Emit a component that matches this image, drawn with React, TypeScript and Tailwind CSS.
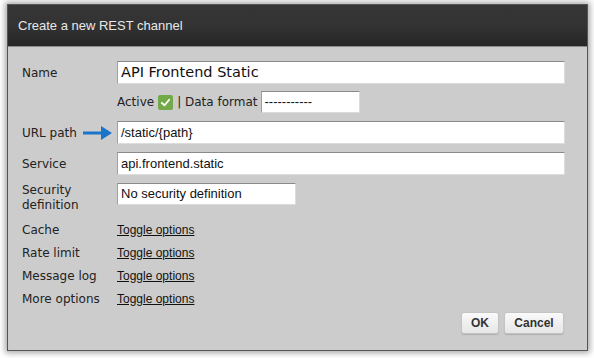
import React from "react";

const labelFont = { fontFamily: '"DejaVu Sans", sans-serif' } as React.CSSProperties;

function Input({ value, w, h = 23, big = false }: { value: string; w: string; h?: number; big?: boolean }) {
  return (
    <div
      className={`${w} bg-white border border-t-[#8a8a8a] border-l-[#a0a0a0] border-r-[#dcdcdc] border-b-[#dcdcdc] flex items-center pl-[3px] text-[#111] ${
        big ? "text-[14.5px] font-['DejaVu_Sans',sans-serif]" : "text-[13px] font-['Liberation_Sans',Arial,sans-serif]"
      }`}
      style={{ height: h }}
    >
      {value}
    </div>
  );
}

function Toggle() {
  return (
    <span className="underline text-[12px] text-[#111] font-['Liberation_Sans',Arial,sans-serif]">
      Toggle options
    </span>
  );
}

export default function App() {
  return (
    <div className="w-[594px] h-[358px] bg-white overflow-hidden pt-[4px] pl-[7px]">
      <div className="w-[581px] h-[347px] border border-[#555] bg-[#cccccc] shadow-[0_0_6px_2px_rgba(0,0,0,0.35)] flex flex-col">
        <div className="h-[42px] bg-gradient-to-b from-[#353535] via-[#333333] to-[#262626] border-b border-[#8a8a8a] flex items-center pl-[10px] text-[13px] text-[#e8e8e8] font-['Liberation_Sans',Arial,sans-serif]">
          Create a new REST channel
        </div>
        <div className="flex flex-col pl-[14px] pt-[14px] text-[12px] text-[#222]" style={labelFont}>
          <div className="flex items-center h-[23px]">
            <div className="w-[95px]">Name</div>
            <Input value="API Frontend Static" w="w-[448px]" big />
          </div>
          <div className="flex items-center h-[22px] mt-[7px] ml-[95px]">
            <span>Active</span>
            <span className="ml-[4px] w-[15px] h-[15px] rounded-[2px] bg-[#74a94a] flex items-center justify-center">
              <svg width="11" height="11" viewBox="0 0 12 12">
                <path d="M2 6.5 L5 9 L10 3" stroke="white" strokeWidth="2" fill="none" strokeLinecap="round" strokeLinejoin="round" />
              </svg>
            </span>
            <span className="ml-[4px]">| Data format</span>
            <div className="ml-[3px]">
              <Input value="-----------" w="w-[99px]" h={22} />
            </div>
          </div>
          <div className="flex items-center h-[23px] mt-[8px]">
            <div className="w-[95px] flex items-center">
              <span>URL path</span>
              <svg className="ml-[6px]" width="30" height="14" viewBox="0 0 30 14">
                <path d="M0 7 H20" stroke="#1a74c9" strokeWidth="3" />
                <path d="M18 0 L29 7 L18 14 Z" fill="#1a74c9" />
              </svg>
            </div>
            <Input value="/static/{path}" w="w-[448px]" />
          </div>
          <div className="flex items-center h-[23px] mt-[8px]">
            <div className="w-[95px]">Service</div>
            <Input value="api.frontend.static" w="w-[448px]" />
          </div>
          <div className="flex items-start mt-[8px]">
            <div className="w-[95px] leading-[15px]">
              Security
              <br />
              definition
            </div>
            <Input value="No security definition" w="w-[179px]" h={22} />
          </div>
          <div className="flex items-center h-[23px] mt-[5px]">
            <div className="w-[95px]">Cache</div>
            <Toggle />
          </div>
          <div className="flex items-center h-[23px]">
            <div className="w-[95px]">Rate limit</div>
            <Toggle />
          </div>
          <div className="flex items-center h-[23px]">
            <div className="w-[95px]">Message log</div>
            <Toggle />
          </div>
          <div className="flex items-center h-[23px]">
            <div className="w-[95px]">More options</div>
            <Toggle />
          </div>
        </div>
        <div className="flex justify-end gap-[5px] pr-[23px] mt-[2px] font-['Liberation_Sans',Arial,sans-serif]">
          <button className="h-[22px] w-[38px] rounded-[3px] border border-[#c4c4c4] bg-gradient-to-b from-[#fafafa] to-[#e6e6e6] text-[12px] font-bold text-[#333] shadow-[0_1px_1px_rgba(0,0,0,0.15)]">
            OK
          </button>
          <button className="h-[22px] w-[60px] rounded-[3px] border border-[#c4c4c4] bg-gradient-to-b from-[#fafafa] to-[#e6e6e6] text-[12px] font-bold text-[#333] shadow-[0_1px_1px_rgba(0,0,0,0.15)]">
            Cancel
          </button>
        </div>
      </div>
    </div>
  );
}
